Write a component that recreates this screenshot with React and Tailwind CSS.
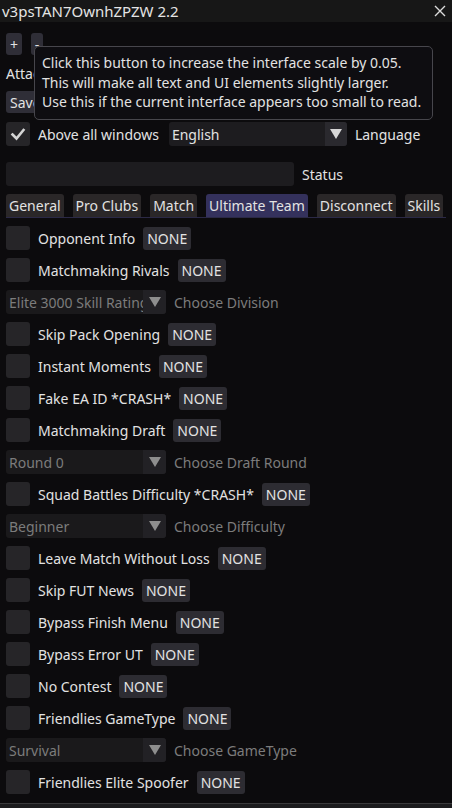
import React from "react";

// ImGui-like cheat menu window, "Ultimate Team" tab open
const font = { fontFamily: '"Noto Sans", "DejaVu Sans", sans-serif' };

function Check({ on }) {
  return (
    <div className="flex h-[24px] w-[24px] shrink-0 items-center justify-center rounded-[3px] bg-[#262528]">
      {on && (
        <svg width="16" height="16" viewBox="0 0 16 16">
          <polyline points="2.5,8.5 6.5,12.5 13.5,4" fill="none" stroke="#d4d4d4" strokeWidth="2.6" strokeLinecap="square" />
        </svg>
      )}
    </div>
  );
}

function KeyBtn() {
  return (
    <span className="flex h-[23px] items-center rounded-[3px] bg-[#2d2c32] px-[4px] text-[#e2e2e2]">NONE</span>
  );
}

function ToggleRow({ label }) {
  return (
    <div className="flex h-[24px] items-center gap-[8px] whitespace-nowrap">
      <Check />
      <span className="text-[#e2e2e2]">{label}</span>
      <KeyBtn />
    </div>
  );
}

function Arrow({ color }) {
  return (
    <svg width="12" height="10" viewBox="0 0 12 10">
      <polygon points="0,0 12,0 6,10" fill={color} />
    </svg>
  );
}

function DimCombo({ value, label }) {
  return (
    <div className="flex h-[24px] items-center gap-[8px] whitespace-nowrap">
      <div className="flex h-[24px] w-[160px] items-center overflow-hidden rounded-[3px] bg-[#1a191b]">
        <span className="min-w-0 flex-1 overflow-hidden pl-[3px] text-[#7c7c7c]">{value}</span>
        <div className="flex h-full w-[23px] shrink-0 items-center justify-center bg-[#222125]">
          <Arrow color="#8e8e8e" />
        </div>
      </div>
      <span className="text-[#7c7c7c]">{label}</span>
    </div>
  );
}

const tabs = ["General", "Pro Clubs", "Match", "Ultimate Team", "Disconnect", "Skills"];

export default function App() {
  return (
    <div className="relative h-[808px] w-[452px] overflow-hidden whitespace-nowrap bg-[#0c0b0d] text-[14px] leading-[19px]" style={font}>
      {/* title bar */}
      <div className="flex h-[22px] items-center justify-between bg-[#171717] pl-[2px] pr-[6px] text-[15px] text-[#e4e4e4]">
        <span>v3psTAN7OwnhZPZW 2.2</span>
        <svg width="12" height="12" viewBox="0 0 12 12">
          <path d="M1 1 L11 11 M11 1 L1 11" stroke="#dcdcdc" strokeWidth="1.4" />
        </svg>
      </div>

      <div className="flex flex-col px-[6px] pt-[11px]">
        <div className="flex gap-[9px]">
          <span className="flex h-[22px] w-[16px] items-center justify-center rounded-[3px] bg-[#2f2e37] text-[#e2e2e2]">+</span>
          <span className="flex h-[22px] w-[12px] items-center justify-center rounded-[3px] bg-[#2f2e37] text-[#e2e2e2]">-</span>
        </div>
        <div className="mt-[9px] h-[20px] leading-[20px] text-[#e2e2e2]">Attach</div>
        <div className="mt-[7px] flex">
          <span className="flex h-[22px] items-center rounded-[3px] bg-[#2f2e37] px-[4px] text-[#e2e2e2]">Save</span>
        </div>

        <div className="mt-[9px] flex h-[24px] items-center gap-[8px]">
          <Check on />
          <span className="text-[#e2e2e2]">Above all windows</span>
          <div className="ml-[2px] flex h-[24px] w-[178px] items-center rounded-[3px] bg-[#1d1c1f]">
            <span className="flex-1 pl-[3px] text-[#e2e2e2]">English</span>
            <div className="flex h-full w-[22px] items-center justify-center rounded-r-[3px] bg-[#2a292e]">
              <Arrow color="#d6d6d6" />
            </div>
          </div>
          <span className="text-[#e2e2e2]">Language</span>
        </div>

        <div className="mt-[16px] flex h-[24px] items-center gap-[8px]">
          <div className="h-[24px] w-[288px] rounded-[3px] bg-[#1d1c1f]" />
          <span className="text-[#e2e2e2]">Status</span>
        </div>

        <div className="mt-[8px] flex h-[24px] gap-[9px] border-b border-[#2b2946]">
          {tabs.map((t) => (
            <span
              key={t}
              className={
                t === "Ultimate Team"
                  ? "flex h-[23px] items-center rounded-t-[3px] bg-[#34315c] px-[3px] text-[#e2e2e2]"
                  : "flex h-[23px] items-center rounded-t-[3px] bg-[#2a2728] px-[3px] text-[#e2e2e2]"
              }
            >
              {t}
            </span>
          ))}
        </div>

        <div className="mt-[8px] flex flex-col gap-[8px]">
          <ToggleRow label="Opponent Info" />
          <ToggleRow label="Matchmaking Rivals" />
          <DimCombo value="Elite 3000 Skill Rating" label="Choose Division" />
          <ToggleRow label="Skip Pack Opening" />
          <ToggleRow label="Instant Moments" />
          <ToggleRow label="Fake EA ID *CRASH*" />
          <ToggleRow label="Matchmaking Draft" />
          <DimCombo value="Round 0" label="Choose Draft Round" />
          <ToggleRow label="Squad Battles Difficulty *CRASH*" />
          <DimCombo value="Beginner" label="Choose Difficulty" />
          <ToggleRow label="Leave Match Without Loss" />
          <ToggleRow label="Skip FUT News" />
          <ToggleRow label="Bypass Finish Menu" />
          <ToggleRow label="Bypass Error UT" />
          <ToggleRow label="No Contest" />
          <ToggleRow label="Friendlies GameType" />
          <DimCombo value="Survival" label="Choose GameType" />
          <ToggleRow label="Friendlies Elite Spoofer" />
        </div>
      </div>

      {/* bottom edge of the window */}
      <div className="absolute bottom-0 left-0 h-[5px] w-full border-t border-[#3a3a3c] bg-[#1c1c1e]" />

      {/* tooltip over the scale buttons */}
      <div className="absolute left-[34px] top-[46px] w-[399px] rounded-[5px] border border-[#47464c] bg-[#0e0d11] px-[7px] pt-[6px] pb-[7px] leading-[19.5px] text-[#e2e2e2]">
        <div>Click this button to increase the interface scale by 0.05.</div>
        <div>This will make all text and UI elements slightly larger.</div>
        <div>Use this if the current interface appears too small to read.</div>
      </div>
    </div>
  );
}
